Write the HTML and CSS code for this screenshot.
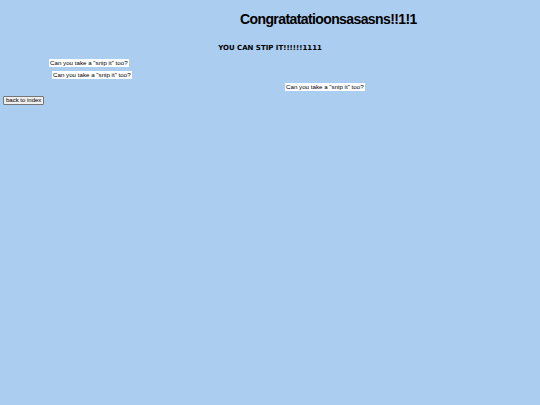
FILE: index.html
```html
<!DOCTYPE html>
<html>
<head>
<meta charset="utf-8">
<link rel="stylesheet" href="styles.css">
</head>
<body>
<h1 class="title">Congratatatioonsasasns!!1!1</h1>
<h2 class="sub">YOU CAN STIP IT!!!!!!1111</h2>
<div class="row row1"><span class="snip">Can you take a "snip it" too?</span></div>
<div class="row row2"><span class="snip">Can you take a "snip it" too?</span></div>
<div class="row row3"><span class="snip">Can you take a "snip it" too?</span></div>
<div class="row row4"><button class="back">back to index</button></div>
</body>
</html>
```
FILE: styles.css
```css
html, body {
  margin: 0;
  padding: 0;
  background: #abcdf0;
  height: 100%;
}
body {
  font-family: "Liberation Sans", Arial, sans-serif;
  color: #000;
}
.title {
  margin: 0;
  padding-top: 10px;
  padding-left: 240px;
  font-family: "Liberation Sans", Arial, sans-serif;
  font-size: 14px;
  font-weight: bold;
  line-height: 18px;
  letter-spacing: -0.6px;
}
.sub {
  margin: 0;
  padding-top: 15px;
  text-align: center;
  font-family: "DejaVu Sans", sans-serif;
  font-size: 7px;
  font-weight: bold;
  line-height: 10px;
}
.row {
  display: flex;
  line-height: 8px;
}
.row1 { margin-top: 6px; padding-left: 49px; }
.row2 { margin-top: 4px; padding-left: 52px; }
.row3 { margin-top: 4px; padding-left: 285px; }
.row4 { margin-top: 5px; padding-left: 3px; }
.snip {
  background: #fff;
  font-size: 6.2px;
  padding: 0 1px;
  height: 8px;
  line-height: 8px;
}
.back {
  font-family: "Liberation Sans", Arial, sans-serif;
  font-size: 6px;
  height: 9px;
  padding: 0 2px;
  line-height: 7px;
  background: #efefef;
  border: 1px solid #767676;
  border-radius: 1px;
  color: #000;
}
```
